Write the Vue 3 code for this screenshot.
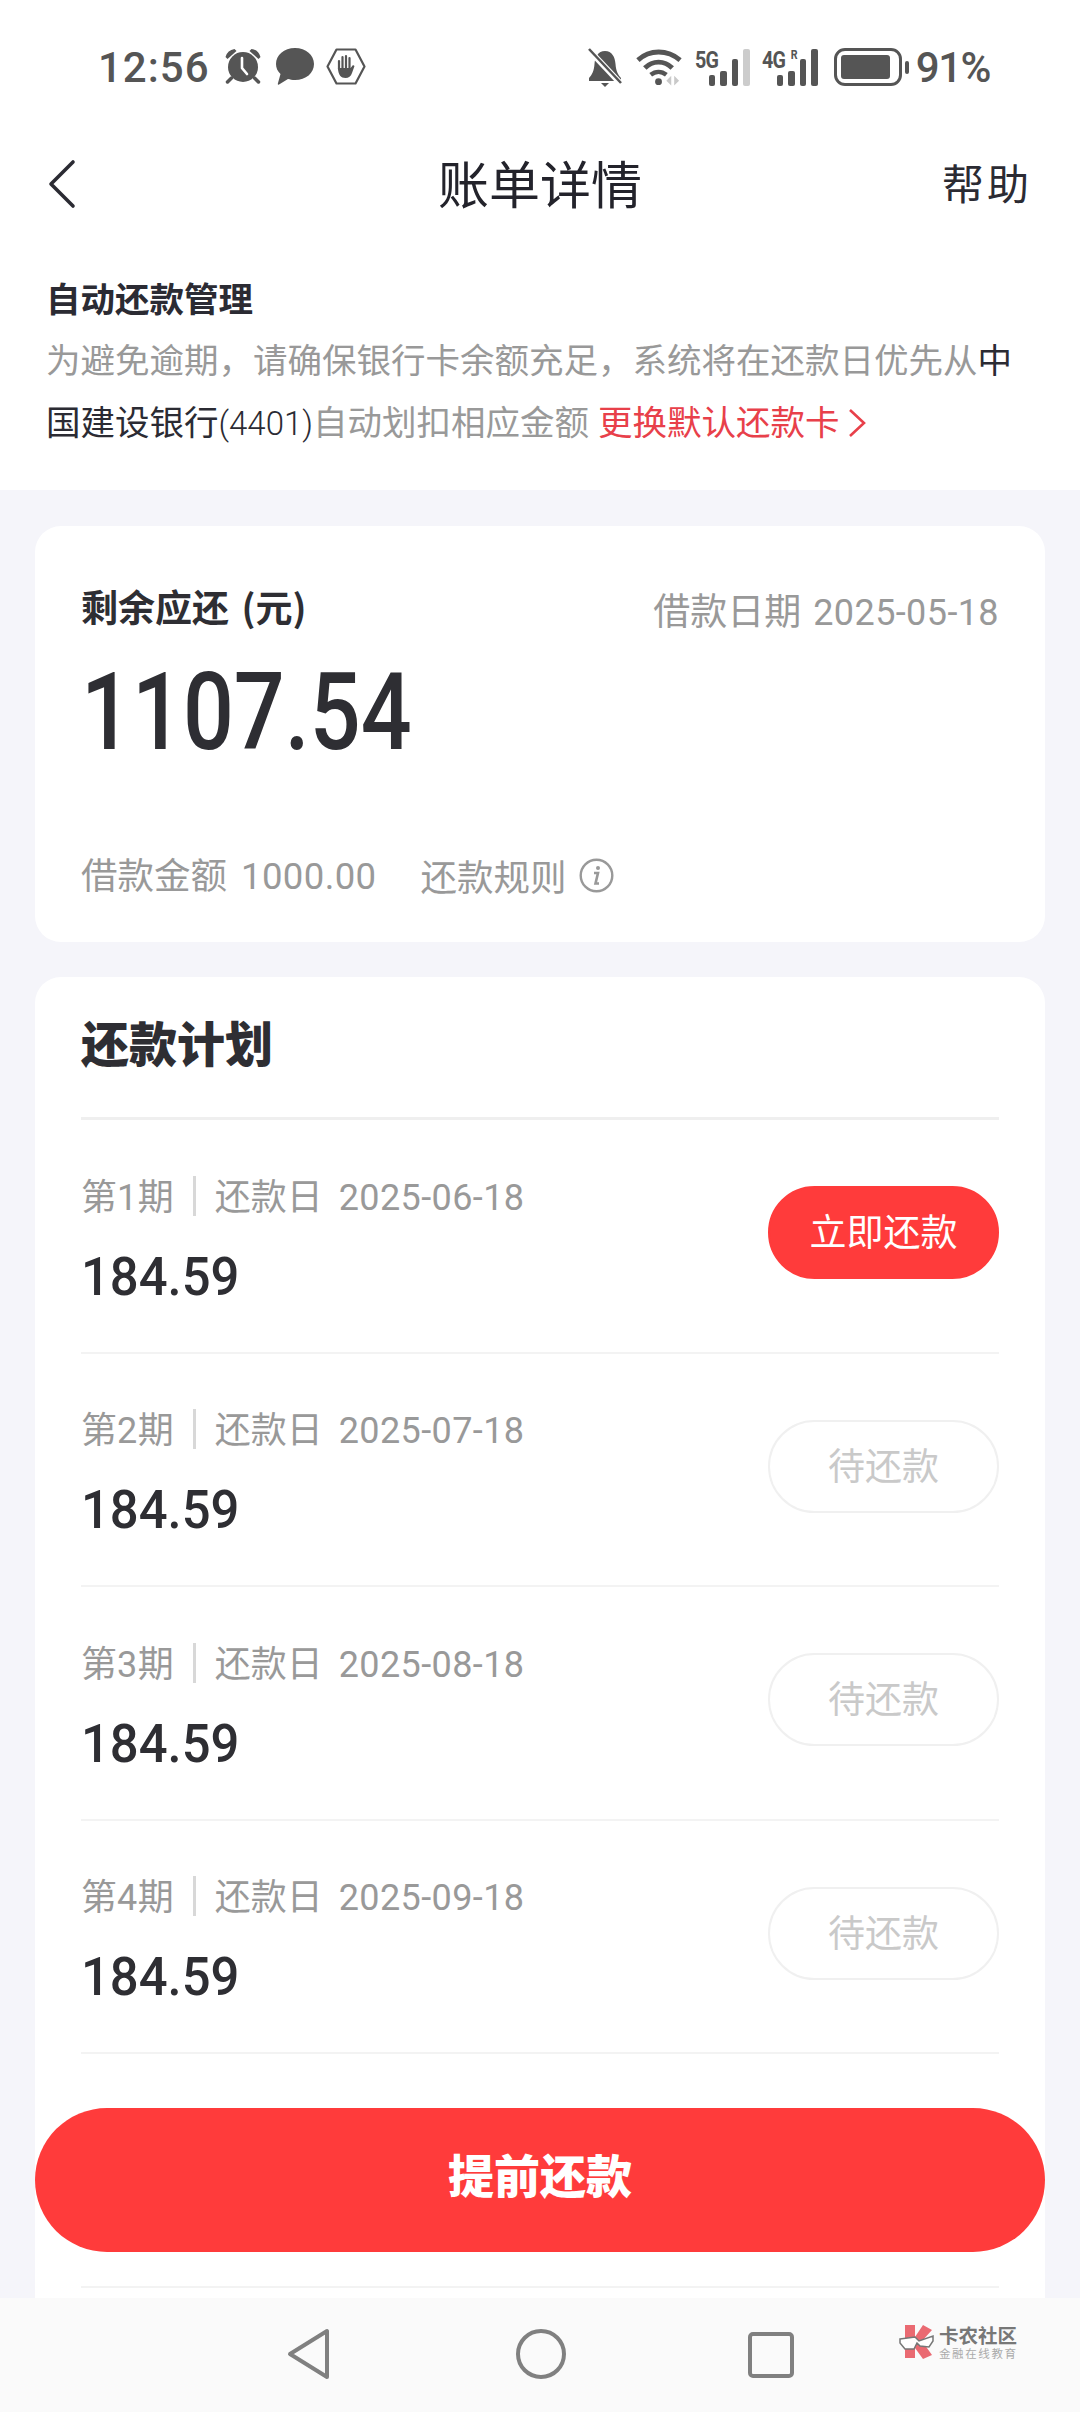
<template>
  <div class="page">
    <div class="scroll">
      <div class="top">
        <!-- status bar -->
        <div class="status">
          <div class="status-left">
            <span class="time">12:56</span>
            <svg class="st-alarm" width="38" height="36" viewBox="0 0 37 36">
              <circle cx="18.5" cy="19" r="15" fill="#555" />
              <path d="M1 9 Q3 2 10 1 L12 3 L3 11Z M36 9 Q34 2 27 1 L25 3 L34 11Z" fill="#555" />
              <path d="M7 30 L3 34 M30 30 L34 34" stroke="#555" stroke-width="3.5" stroke-linecap="round" />
              <path d="M17.5 10 V20 L22.5 26" stroke="#fff" stroke-width="2.600" fill="none" stroke-linecap="round" />
            </svg>
            <svg class="st-chat" width="38" height="37" viewBox="0 0 38 37">
              <path d="M19 0 C30 0 38 7 38 16 C38 25 30 32 19 32 C16 32 14 31.5 12 31 L3 36.5 C2 37 1.500 36.500 2 35 L4.500 26 C1.500 23 0 20 0 16 C0 7 8 0 19 0Z" fill="#555" />
            </svg>
            <svg class="st-hand" width="40" height="37" viewBox="0 0 40 37">
              <path d="M10.500 1.500 H29.500 L38.500 18.500 L29.500 35.500 H10.500 L1.500 18.500Z" fill="none" stroke="#555" stroke-width="2.200" stroke-linejoin="round" />
              <path d="M13 13 v8 M16.500 9 v11 M20 8 v12 M23.500 10 v10" stroke="#555" stroke-width="2.200" stroke-linecap="round" fill="none" />
              <path d="M11.900 20 H24.600 L27 17 L28.500 18 L26 25 C25 28.500 22.500 30 19.500 30 C15 30 12.300 27 11.900 20Z" fill="#555" />
            </svg>
          </div>
          <div class="status-right">
            <svg class="st-bell" width="36" height="40" viewBox="0 0 36 40">
              <path d="M18 3 C25 3 28 9 28.500 16 C29 23 31 27 34 30 V33 H2 V30 C5 27 7 23 7.500 16 C8 9 11 3 18 3Z" fill="#555" />
              <path d="M14 35 H22 L18 39Z" fill="#555" />
              <path d="M3 3 L34 36" stroke="#fff" stroke-width="6" />
              <path d="M2 1 L34 35" stroke="#555" stroke-width="2.500" />
            </svg>
            <svg class="st-wifi" width="47" height="38" viewBox="0 0 48 38">
              <path d="M2 12 C14 1 32 1 45 12" fill="none" stroke="#555" stroke-width="5" />
              <path d="M9 20 C17 12 29 12 37 20" fill="none" stroke="#555" stroke-width="5" />
              <path d="M15 27 C20 23 26 23 31 27" fill="none" stroke="#555" stroke-width="4.500" />
              <circle cx="23" cy="34" r="3.500" fill="#555" />
              <path d="M36 28 V38 L31 33Z M39 28 V38 L44 33Z" fill="#c9c9c9" />
            </svg>
            <div class="net">
              <span class="net-label">5G</span>
              <div class="bars">
                <i class="b1"></i><i class="b2"></i><i class="b3"></i><i class="b4 off"></i>
              </div>
            </div>
            <div class="net net-last">
              <span class="net-label">4G<sup>R</sup></span>
              <div class="bars">
                <i class="b1"></i><i class="b2"></i><i class="b3"></i><i class="b4"></i>
              </div>
            </div>
            <div class="battery">
              <div class="battery-body"><div class="battery-fill"></div></div>
              <div class="battery-tip"></div>
            </div>
            <span class="pct">91%</span>
          </div>
        </div>

        <!-- nav -->
        <div class="nav">
          <svg class="back" width="28" height="50" viewBox="0 0 28 50">
            <path d="M25 3 L3 25 L25 47" fill="none" stroke="#2b2b33" stroke-width="3.600" stroke-linecap="round" stroke-linejoin="round" />
          </svg>
          <span class="nav-title">账单详情</span>
          <span class="nav-help">帮助</span>
        </div>

        <!-- auto repay notice -->
        <div class="notice">
          <div class="notice-title">自动还款管理</div>
          <div class="notice-text">
            为避免逾期，请确保银行卡余额充足，系统将在还款日优先从<span class="dark">中</span><span class="dark">国建设银行<span class="num-thin">(4401)</span></span><span>自动划扣相应金额</span><span class="red">更换默认还款卡<svg class="red-arrow" width="18" height="30" viewBox="0 0 18 30"><path d="M2 2 L16 15 L2 28" fill="none" stroke="#e8404a" stroke-width="2.600" /></svg></span>
          </div>
        </div>
      </div>

      <div class="cards">
        <div class="card summary">
          <div class="sum-head">
            <span class="sum-label">剩余应还 (元)</span>
            <span class="sum-date">借款日期<span class="num head-num">2025-05-18</span></span>
          </div>
          <div class="sum-total"><span class="squeeze">1107.54</span></div>
          <div class="sum-foot">
            <span>借款金额<span class="num foot-num">1000.00</span></span>
            <span class="rule">还款规则
              <svg width="35" height="35" viewBox="0 0 35 35">
                <circle cx="17.500" cy="17.500" r="15.800" fill="none" stroke="#999" stroke-width="2.400" />
                <circle cx="19" cy="10" r="2" fill="#999" />
                <path d="M15 15 H19 L16.500 25.500 H20" fill="none" stroke="#999" stroke-width="2.600" />
              </svg>
            </span>
          </div>
        </div>

        <div class="card plan">
          <div class="plan-title">还款计划</div>
          <div v-for="row in rows" :key="row.no" class="row">
            <div class="row-info">
              <div class="row-meta">
                <span>第<span class="num">{{ row.no }}</span>期</span>
                <i class="sep"></i>
                <span>还款日<span class="num row-date">{{ row.date }}</span></span>
              </div>
              <div class="row-amount"><span class="squeeze">{{ row.amount }}</span></div>
            </div>
            <div class="pill" :class="{ active: row.active }">{{ row.active ? '立即还款' : '待还款' }}</div>
          </div>
          <!-- rows that sit behind the floating button, only their lines show -->
          <div class="row"></div>
          <div class="row"></div>
        </div>
      </div>
    </div>

    <div class="cta">提前还款</div>

    <!-- system nav -->
    <div class="sysnav">
      <svg width="44" height="52" viewBox="0 0 44 52">
        <path d="M40 3 V49 L3 26Z" fill="none" stroke="#808080" stroke-width="4" stroke-linejoin="round" />
      </svg>
      <svg width="50" height="52" viewBox="0 0 50 52">
        <circle cx="25" cy="26" r="23" fill="none" stroke="#808080" stroke-width="4" />
      </svg>
      <svg width="46" height="46" viewBox="0 0 46 46">
        <rect x="2" y="2" width="42" height="42" rx="3" fill="none" stroke="#808080" stroke-width="4" />
      </svg>
    </div>

    <!-- watermark -->
    <div class="mark">
      <svg width="36" height="36" viewBox="0 0 36 36">
        <path d="M6 1 H16 V13 L24 1 L33 6 L23 17 L33 31 L24 35 L16 24 V34 H6Z" fill="#ea6a72" />
        <path d="M1 15 L16 13 L20 17 L34 12 V17 L30 23 L21 22 L18 19 L15 25 L6 25 L1 19Z" fill="#fff" stroke="#777" stroke-width="1.500" />
      </svg>
      <div class="mark-text">
        <span class="mark-a">卡农社区</span>
        <span class="mark-b">金融在线教育</span>
      </div>
    </div>
  </div>
</template>

<script setup>
const rows = [
  { no: 1, date: '2025-06-18', amount: '184.59', active: true },
  { no: 2, date: '2025-07-18', amount: '184.59', active: false },
  { no: 3, date: '2025-08-18', amount: '184.59', active: false },
  { no: 4, date: '2025-09-18', amount: '184.59', active: false },
]
</script>

<style>
html, body {
  margin: 0;
  background: #fff;
}
</style>

<style scoped>
.page {
  position: relative;
  width: 1080px;
  height: 2412px;
  overflow: hidden;
  display: flex;
  flex-direction: column;
  background: #f5f5fa;
  font-family: "Noto Sans CJK SC", Roboto, sans-serif;
  color: #2b2b33;
}
.scroll {
  flex: 1;
  min-height: 0;
  overflow: hidden;
}
.num {
  font-family: Roboto, "Noto Sans CJK SC", sans-serif;
  letter-spacing: .4px;
}
.num-thin {
  font-family: Roboto, sans-serif;
  font-size: 33px;
  font-weight: 300;
}
.squeeze {
  display: inline-block;
  font-family: Roboto, sans-serif;
  transform-origin: left center;
}

.top {
  background: #fff;
  height: 490px;
}

/* status bar */
.status {
  height: 136px;
  box-sizing: border-box;
  padding: 48px 90px 0 98px;
  display: flex;
  justify-content: space-between;
  align-items: flex-start;
  color: #555;
}
.status-left, .status-right {
  display: flex;
  align-items: flex-start;
}
.time {
  font: 500 42px/40px Roboto, sans-serif;
  letter-spacing: 1px;
  width: 126px;
}
.st-chat { margin-left: 14px; }
.st-hand { margin-left: 12px; }
.st-bell { margin-right: 13px; }
.st-wifi { margin-right: 12px; }
.net {
  position: relative;
  width: 55px;
  height: 38px;
  margin-right: 12px;
}
.net-last {
  width: 56px;
  margin-right: 16px;
}
.net-label {
  position: absolute;
  left: 0;
  top: 0;
  font: 700 24px/24px Roboto, sans-serif;
  letter-spacing: -1px;
  transform: scaleX(.82);
  transform-origin: left top;
}
.net-label sup {
  font-size: 13px;
  line-height: 0;
  margin-left: 7px;
}
.bars {
  position: absolute;
  right: 0;
  bottom: 0;
  display: flex;
  align-items: flex-end;
  gap: 5px;
}
.bars i {
  display: block;
  width: 6.500px;
  border-radius: 2px;
  background: #555;
}
.bars .b1 { height: 11px; }
.bars .b2 { height: 15px; }
.bars .b3 { height: 27px; }
.bars .b4 { height: 37px; }
.bars .off { background: #ccc; }
.battery {
  display: flex;
  align-items: center;
  height: 38px;
  margin-right: 7px;
}
.battery-body {
  width: 68px;
  height: 38px;
  box-sizing: border-box;
  border: 3px solid #555;
  border-radius: 11px;
  padding: 4px;
}
.battery-fill {
  width: 49px;
  height: 100%;
  background: #555;
  border-radius: 3px;
}
.battery-tip {
  width: 4px;
  height: 13px;
  margin-left: 3px;
  background: #555;
  border-radius: 2px;
}
.pct {
  font: 500 42px/40px Roboto, sans-serif;
  letter-spacing: -1.500px;
}

/* nav bar */
.nav {
  position: relative;
  height: 92px;
  display: flex;
  align-items: center;
  justify-content: space-between;
  padding: 0 48px;
}
.back {
  margin-top: 4px;
}
.nav-title {
  position: absolute;
  left: 0;
  right: 0;
  text-align: center;
  font-size: 51px;
  line-height: 58px;
  color: #23232b;
}
.nav-help {
  position: relative;
  font-size: 42px;
  line-height: 56px;
  letter-spacing: 3px;
}

.notice {
  padding: 49px 35px 0 46px;
}
.notice-title {
  font-size: 34.500px;
  line-height: 40px;
  font-weight: 700;
  color: #2b2b33;
}
.notice-text {
  margin-top: 10px;
  font-size: 34.500px;
  line-height: 62px;
  color: #999;
}
.dark { color: #2b2b33; }
.red { color: #e8404a; white-space: nowrap; margin-left: 9px; }
.red-arrow {
  vertical-align: -3px;
  margin-left: 8px;
}

/* cards */
.cards {
  padding: 36px 35px 0;
  display: flex;
  flex-direction: column;
  gap: 35px;
}
.card {
  background: #fff;
  border-radius: 26px;
  padding: 0 46px;
}
.summary {
  height: 416px;
  flex: none;
  box-sizing: border-box;
  padding-top: 58px;
}
.sum-head {
  display: flex;
  justify-content: space-between;
  align-items: center;
  height: 50px;
}
.sum-label {
  margin-top: -6px;
  font-size: 37px;
  font-weight: 700;
  word-spacing: 4px;
  color: #2e2e33;
}
.sum-date {
  font-size: 37px;
  color: #999;
}
.head-num {
  margin-left: 12px;
  font-size: 36px;
}
.sum-total {
  margin-top: 13px;
  height: 110px;
  font-size: 108px;
  line-height: 110px;
  font-weight: 500;
  color: #2e2e33;
}
.sum-total .squeeze {
  transform: scaleX(.83);
}
.sum-foot {
  margin-top: 92px;
  display: flex;
  align-items: center;
  gap: 44px;
  font-size: 36.500px;
  line-height: 50px;
  color: #999;
}
.foot-num {
  margin-left: 14px;
}
.rule {
  display: flex;
  align-items: center;
  gap: 12px;
}

.plan-title {
  height: 143px;
  box-sizing: border-box;
  border-bottom: 3px solid #efefef;
  padding-top: 28px;
  font-size: 48px;
  line-height: 72px;
  font-weight: 900;
  color: #2e2e33;
}
.row {
  height: 233.500px;
  box-sizing: border-box;
  border-bottom: 2px solid #f3f3f3;
  display: flex;
  align-items: center;
  justify-content: space-between;
}
.row-meta {
  display: flex;
  align-items: center;
  font-size: 36px;
  line-height: 50px;
  color: #999;
}
.row-date {
  margin-left: 16px;
}
.sep {
  width: 3px;
  height: 40px;
  background: #d8d8d8;
  margin: 0 19px;
}
.row-amount {
  margin-top: 18px;
  height: 62px;
  font-size: 54px;
  line-height: 62px;
  font-weight: 500;
  color: #2e2e33;
}
.row-amount .squeeze {
  transform: scaleX(.94);
}
.pill {
  margin-top: -6px;
  width: 231px;
  height: 93px;
  box-sizing: border-box;
  padding-bottom: 5px;
  border-radius: 47px;
  border: 2px solid #f0f0f0;
  display: flex;
  align-items: center;
  justify-content: center;
  font-size: 37px;
  color: #c9c9c9;
}
.pill.active {
  background: #ff3b3b;
  border-color: #ff3b3b;
  color: #fff;
}

.cta {
  position: absolute;
  left: 35px;
  right: 35px;
  top: 2108px;
  height: 144px;
  box-sizing: border-box;
  padding-bottom: 14px;
  border-radius: 72px;
  background: #ff3b3b;
  color: #fff;
  font-size: 46px;
  font-weight: 900;
  display: flex;
  align-items: center;
  justify-content: center;
}

.sysnav {
  flex: none;
  height: 114px;
  box-sizing: border-box;
  background: #fafafa;
  padding-left: 287px;
  padding-top: 30px;
  display: flex;
  align-items: flex-start;
  gap: 185px;
}
.sysnav svg:last-child { margin-top: 4px; margin-left: -3px; }

.mark {
  position: absolute;
  left: 899px;
  top: 2324px;
  display: flex;
  gap: 4px;
}
.mark-text {
  display: flex;
  flex-direction: column;
  color: #777;
}
.mark-a {
  font-size: 19.500px;
  line-height: 22px;
  font-weight: 700;
}
.mark-b {
  font-size: 11.500px;
  line-height: 14px;
  letter-spacing: 1.600px;
  color: #aaa;
}
</style>
